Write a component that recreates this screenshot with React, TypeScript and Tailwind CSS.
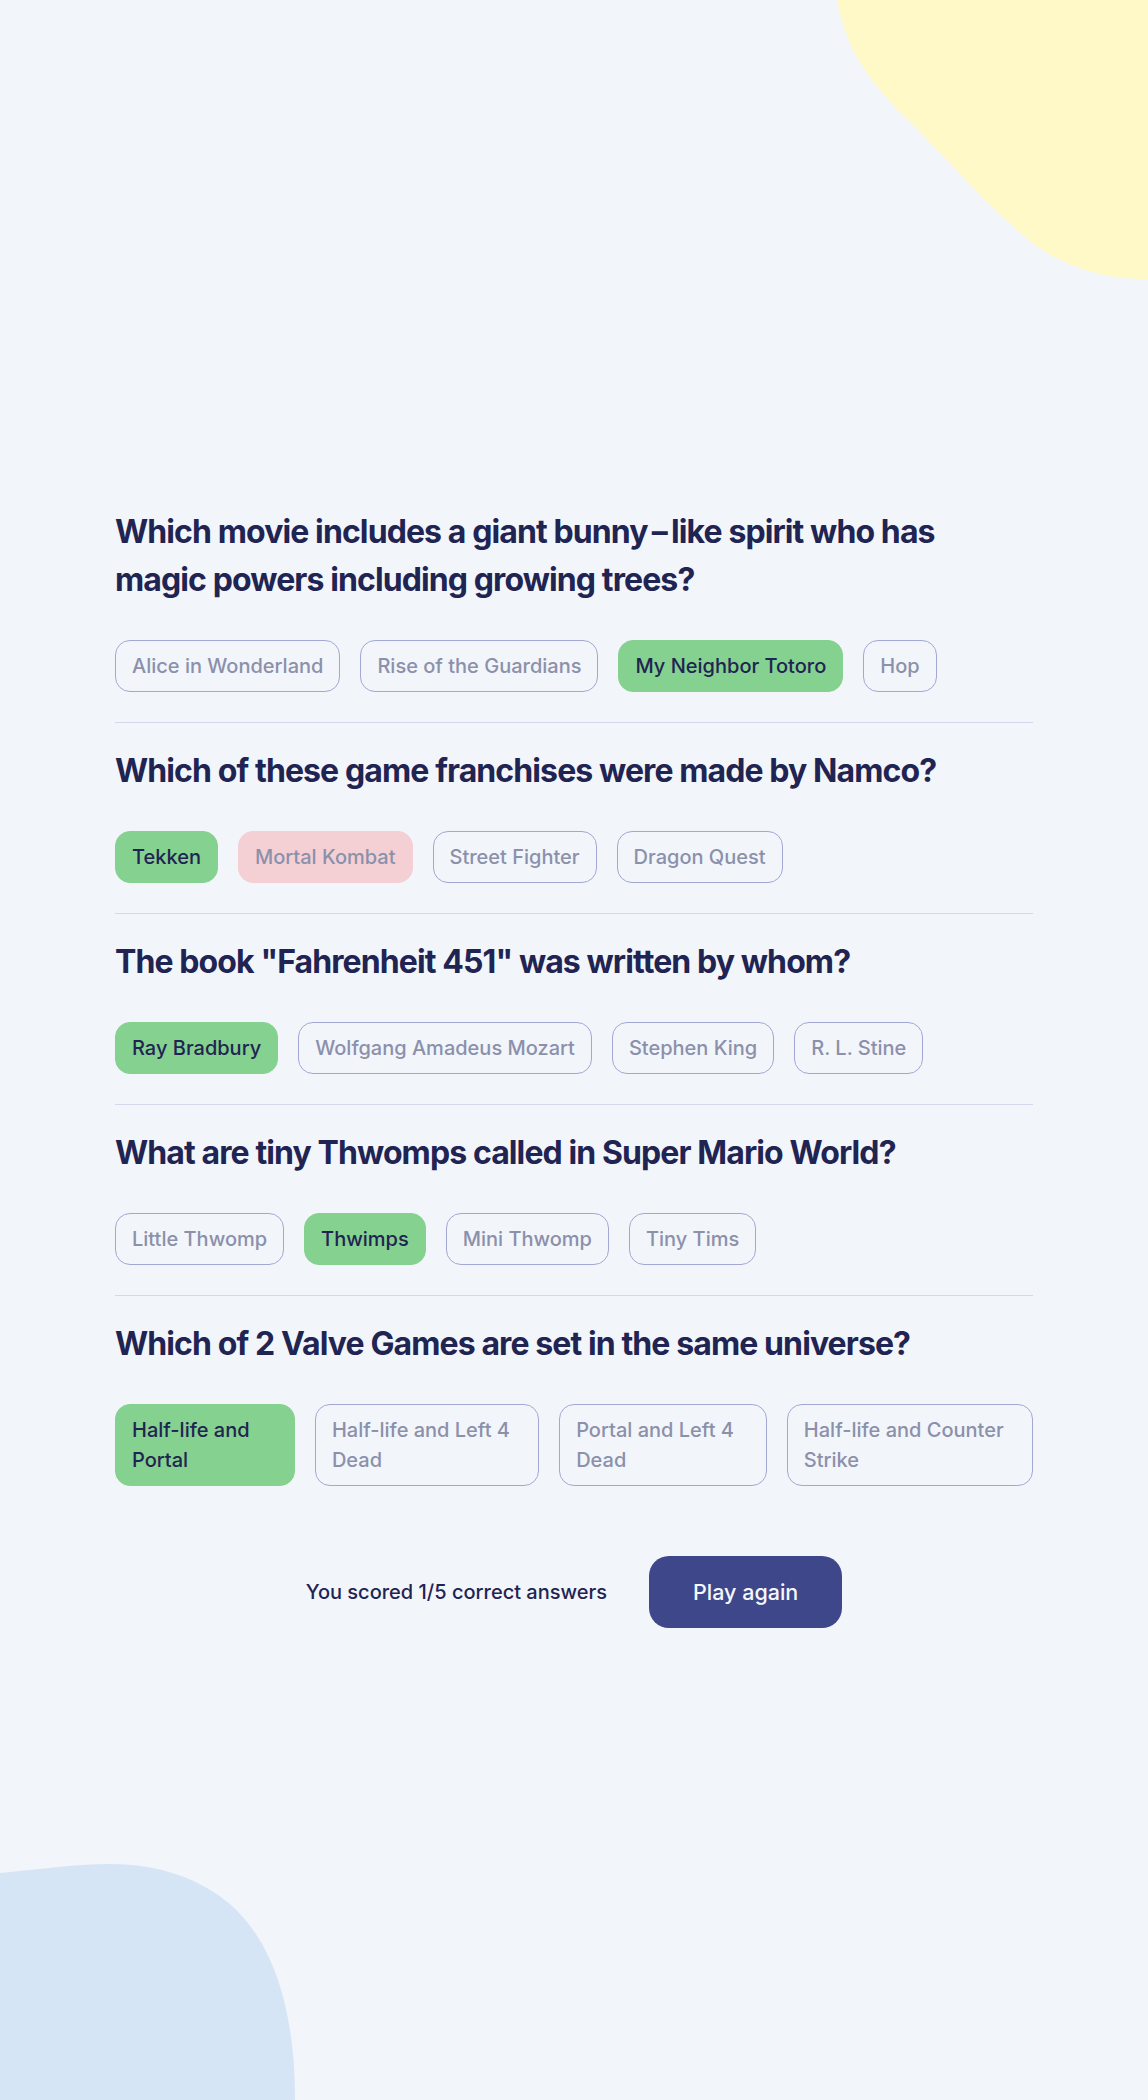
import React from "react";

type Answer = {
  text: string;
  state?: "correct" | "wrong";
};

type Question = {
  question: string;
  answers: Answer[];
};

const questions: Question[] = [
  {
    question:
      "Which movie includes a giant bunny\u2009–\u2009like spirit who has magic powers including growing trees?",
    answers: [
      { text: "Alice in Wonderland" },
      { text: "Rise of the Guardians" },
      { text: "My Neighbor Totoro", state: "correct" },
      { text: "Hop" },
    ],
  },
  {
    question: "Which of these game franchises were made by Namco?",
    answers: [
      { text: "Tekken", state: "correct" },
      { text: "Mortal Kombat", state: "wrong" },
      { text: "Street Fighter" },
      { text: "Dragon Quest" },
    ],
  },
  {
    question: 'The book "Fahrenheit 451" was written by whom?',
    answers: [
      { text: "Ray Bradbury", state: "correct" },
      { text: "Wolfgang Amadeus Mozart" },
      { text: "Stephen King" },
      { text: "R. L. Stine" },
    ],
  },
  {
    question: "What are tiny Thwomps called in Super Mario World?",
    answers: [
      { text: "Little Thwomp" },
      { text: "Thwimps", state: "correct" },
      { text: "Mini Thwomp" },
      { text: "Tiny Tims" },
    ],
  },
  {
    question: "Which of 2 Valve Games are set in the same universe?",
    answers: [
      { text: "Half-life and Portal", state: "correct" },
      { text: "Half-life and Left 4 Dead" },
      { text: "Portal and Left 4 Dead" },
      { text: "Half-life and Counter Strike" },
    ],
  },
];

const answerClass = (state?: "correct" | "wrong") => {
  switch (state) {
    case "correct":
      return "bg-[#85d18f] border-[#85d18f] text-[#1f2452]";
    case "wrong":
      return "bg-[#f4d0d4] border-[#f4d0d4] text-[#8b90ab]";
    default:
      return "bg-transparent border-[#a2a8d3] text-[#8b90ab]";
  }
};

export default function App() {
  return (
    <div
      className="relative min-h-[2100px] overflow-hidden bg-[#f2f5fa]"
      style={{ fontFamily: "Inter, 'Noto Sans', sans-serif" }}
    >
      {/* Decorative blobs */}
      <svg
        className="absolute right-0 top-0"
        width="311"
        height="280"
        viewBox="0 0 311 280"
      >
        <path
          d="M0,0 C8,45 28,78 68,117 C110,158 150,207 198,245 C234,270 270,279 311,279 L311,0 Z"
          fill="#fff9c8"
        />
      </svg>
      <svg
        className="absolute bottom-0 left-0"
        width="296"
        height="236"
        viewBox="0 0 296 236"
      >
        <path
          d="M0,9 C40,5 80,0 110,0 C160,0 200,15 230,40 C266,72 295,130 295,236 L0,236 Z"
          fill="#d6e5f5"
        />
      </svg>

      <div className="relative mx-auto w-[918px] pt-[508px]">
        {questions.map((q, i) => (
          <div key={i}>
            {i > 0 && <div className="mb-6 h-px bg-[#d3d8ee]" />}
            <h2 className="pr-[60px] text-[32px] font-bold leading-[48px] tracking-[-0.028em] text-[#1f2452]">
              {q.question}
            </h2>
            <div className="mt-9 flex gap-5">
              {q.answers.map((a) => (
                <button
                  key={a.text}
                  className={`rounded-[15px] border px-4 py-[10px] text-left text-[20px] font-medium leading-[30px] ${answerClass(a.state)}`}
                >
                  {a.text}
                </button>
              ))}
            </div>
            {i < questions.length - 1 && <div className="h-[30px]" />}
          </div>
        ))}

        {/* Score */}
        <div className="mt-[70px] flex items-center justify-center gap-[42px]">
          <p className="text-[20px] font-medium text-[#1f2452]">
            You scored 1/5 correct answers
          </p>
          <button className="rounded-[20px] bg-[#3d4789] px-[44px] py-[21px] text-[21.5px] font-medium leading-[30px] text-[#f5f7fb]">
            Play again
          </button>
        </div>
      </div>
    </div>
  );
}
